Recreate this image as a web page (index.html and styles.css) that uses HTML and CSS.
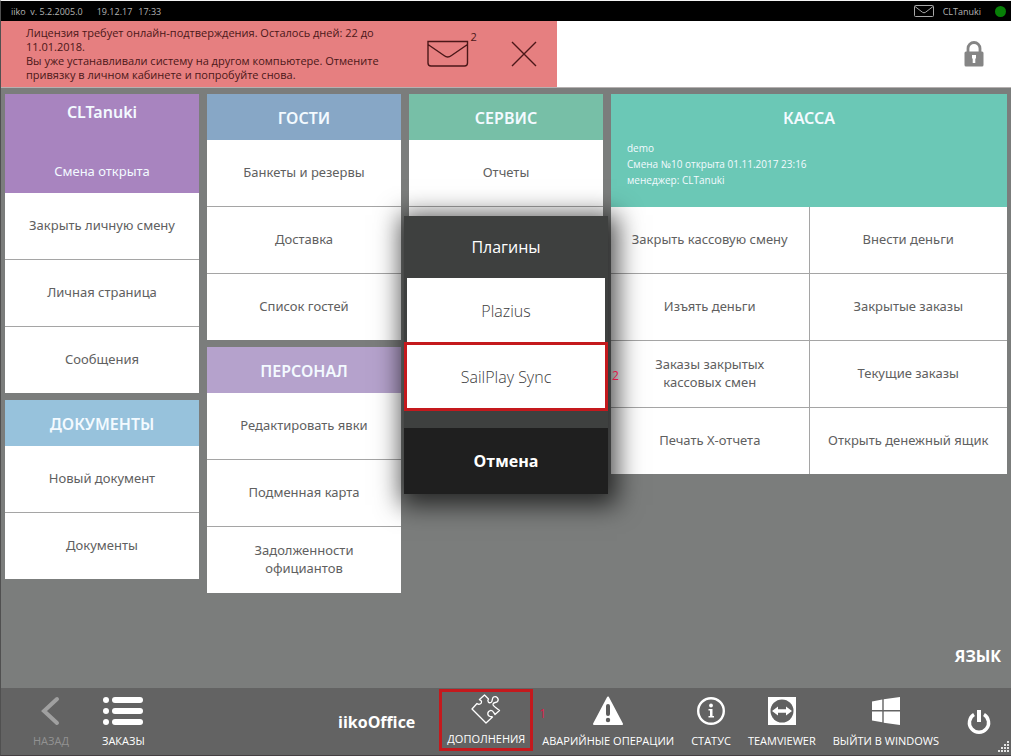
FILE: index.html
```html
<!DOCTYPE html>
<html lang="ru">
<head>
<meta charset="utf-8">
<title>iiko</title>
<link rel="stylesheet" href="styles.css">
</head>
<body>
<div class="app">
  <header class="status">
    <span>iiko&nbsp; v. 5.2.2005.0</span>
    <span class="status-date">19.12.17</span>
    <span class="status-time">17:33</span>
    <svg class="status-mail" width="20" height="12" viewBox="0 0 20 12" fill="none" stroke="#a8a8a8"><rect x=".5" y=".5" width="19" height="11" rx="1"/><path d="M1 1.5 8.500 7.300Q10 8.300 11.500 7.300L19 1.500"/></svg>
    <span class="status-user">CLTanuki</span>
    <span class="online"></span>
  </header>

  <section class="notice-row">
    <div class="notice">
      <p class="notice-text">Лицензия требует онлайн-подтверждения. Осталось дней: 22 до 11.01.2018.<br>Вы уже устанавливали систему на другом компьютере. Отмените привязку в личном кабинете и попробуйте снова.</p>
      <button class="icon-btn mail-btn" aria-label="Сообщения">
        <svg width="42" height="28" viewBox="0 0 42 28" fill="none" stroke="#4b1718" stroke-width="1.4"><path d="M1 1.5H40.5V23Q40.5 26 37.5 26H4Q1 26 1 23ZM1 4.500 17 15.500Q20.700 18.500 24.500 15.500L40.500 4.500"/></svg>
        <span class="mail-count">2</span>
      </button>
      <button class="icon-btn" aria-label="Закрыть">
        <svg width="26" height="26" viewBox="0 0 26 26" stroke="#4b1718" stroke-width="1.4"><path d="M1 1 25 25M25 1 1 25"/></svg>
      </button>
    </div>
    <button class="icon-btn lock" aria-label="Заблокировать">
      <svg width="20" height="26" viewBox="0 0 20 26"><path d="M4 11V7.500a6 6 0 0 1 12 0V11" fill="none" stroke="#858585" stroke-width="2.800"/><rect x=".5" y="10.500" width="19" height="15" rx="1.500" fill="#858585"/><path d="M8 14h4v3.500h-.7V22H8.700v-4.500H8z" fill="#fff"/></svg>
    </button>
  </section>

  <main class="board">
    <div class="column">
      <section class="card">
        <header class="card-head user-head"><h2>CLTanuki</h2><p>Смена открыта</p></header>
        <div class="cells">
          <button class="cell">Закрыть личную смену</button>
          <button class="cell">Личная страница</button>
          <button class="cell">Сообщения</button>
        </div>
      </section>
      <section class="card">
        <header class="card-head docs-head"><h2>ДОКУМЕНТЫ</h2></header>
        <div class="cells">
          <button class="cell">Новый документ</button>
          <button class="cell">Документы</button>
        </div>
      </section>
    </div>
    <div class="column">
      <section class="card">
        <header class="card-head guest-head"><h2>ГОСТИ</h2></header>
        <div class="cells">
          <button class="cell">Банкеты и резервы</button>
          <button class="cell">Доставка</button>
          <button class="cell">Список гостей</button>
        </div>
      </section>
      <section class="card">
        <header class="card-head staff-head"><h2>ПЕРСОНАЛ</h2></header>
        <div class="cells">
          <button class="cell">Редактировать явки</button>
          <button class="cell">Подменная карта</button>
          <button class="cell">Задолженности официантов</button>
        </div>
      </section>
    </div>
    <div class="column">
      <section class="card">
        <header class="card-head service-head"><h2>СЕРВИС</h2></header>
        <div class="cells">
          <button class="cell">Отчеты</button>
          <div class="cell"></div>
        </div>
      </section>
    </div>
    <div class="column wide">
      <section class="card">
        <header class="card-head cash-head">
          <h2>КАССА</h2>
          <p>demo<br>Смена №10 открыта 01.11.2017 23:16<br>менеджер: CLTanuki</p>
        </header>
        <div class="cells two">
          <button class="cell">Закрыть кассовую смену</button>
          <button class="cell">Внести деньги</button>
          <button class="cell">Изъять деньги</button>
          <button class="cell">Закрытые заказы</button>
          <button class="cell narrow">Заказы закрытых кассовых смен</button>
          <button class="cell">Текущие заказы</button>
          <button class="cell">Печать X-отчета</button>
          <button class="cell">Открыть денежный ящик</button>
        </div>
      </section>
    </div>
  </main>

  <button class="language">ЯЗЫК</button>

  <footer class="toolbar">
    <button class="tool back" disabled>
      <svg width="28" height="30" viewBox="0 0 28 30" fill="none" stroke="#a0a0a0" stroke-width="4" stroke-linecap="round"><path d="M20 3 7 15 20 27"/></svg>
      <span>НАЗАД</span>
    </button>
    <button class="tool orders">
      <svg width="42" height="30" viewBox="0 0 42 30" fill="#fff"><circle cx="4" cy="4" r="3"/><circle cx="4" cy="15" r="3"/><circle cx="4" cy="26" r="3"/><rect x="10" y="1" width="31" height="6" rx="3"/><rect x="10" y="12" width="31" height="6" rx="3"/><rect x="10" y="23" width="31" height="6" rx="3"/></svg>
      <span>ЗАКАЗЫ</span>
    </button>
    <button class="office">iikoOffice</button>
    <button class="tool addons">
      <svg width="30" height="30" viewBox="0 0 30 30" fill="none" stroke="#fff" stroke-width="1.300" stroke-linejoin="round"><path d="M1 15 6 9.500C8 11 11 10 10.500 7.500 10 5.500 8 6 8.500 5.500L13.500 1 17.500 5C16 7 17.500 9.500 20 8.500 22 7.500 20.500 4.500 22.500 3 25.500 1.500 28.500 5 26.500 7.500 25 9 22.500 8 22 10 21.500 11.500 23 12 24 13L28.500 16.500 24 20.500C22.500 18.500 22 16 19.500 16.500 16 17.500 16 21.500 19 22.500 20.500 23 21 22 21.500 23L15 29Z"/></svg>
      <span>ДОПОЛНЕНИЯ</span>
      <span class="mark mark-one">1</span>
    </button>
    <button class="tool">
      <svg width="32" height="30" viewBox="0 0 32 30"><path d="M16 1.500 30 28H2Z" fill="#fff" stroke="#fff" stroke-width="2" stroke-linejoin="round"/><path d="M16 10v8" stroke="#5c5c5c" stroke-width="4" stroke-linecap="round"/><circle cx="16" cy="24" r="2.200" fill="#5c5c5c"/></svg>
      <span>АВАРИЙНЫЕ ОПЕРАЦИИ</span>
    </button>
    <button class="tool">
      <svg width="30" height="30" viewBox="0 0 30 30"><circle cx="15" cy="15" r="12.800" fill="none" stroke="#fff" stroke-width="2.400"/><circle cx="15" cy="9.500" r="1.900" fill="#fff"/><path d="M12.500 13h4v7h1.500v1.600h-5.500V20H14v-5.500h-1.500z" fill="#fff"/></svg>
      <span>СТАТУС</span>
    </button>
    <button class="tool">
      <svg width="30" height="30" viewBox="0 0 30 30"><path d="M1 1h28v28H1z" fill="#fff"/><circle cx="15" cy="15" r="11.500" fill="#616161"/><path d="m5 15 6-4.500v2.800h8v-2.800l6 4.500-6 4.500v-2.800h-8v2.800z" fill="#fff"/></svg>
      <span>TEAMVIEWER</span>
    </button>
    <button class="tool">
      <svg width="30" height="30" viewBox="0 0 30 30" fill="#fff"><path d="M1 5.500 11.300 3.500V14H1zM12.700 3.200 29 1v13H12.700zM1 15.500h10.300v10.800L1 24.500zM12.700 15.500H29V29l-16.300-2.300z"/></svg>
      <span>ВЫЙТИ В WINDOWS</span>
    </button>
    <button class="icon-btn power" aria-label="Выключить">
      <svg width="24" height="26" viewBox="0 0 24 26" fill="none" stroke="#fff" stroke-width="3.400"><path d="M7 5.500a9.600 9.600 0 1 0 10 0"/><path d="M12 1v12" stroke-width="4"/></svg>
    </button>
    <svg class="grip" width="12" height="12" viewBox="0 0 12 12" fill="#e4e4e4"><path d="M9 0h2v2H9zM6 3h2v2H6zM9 3h2v2H9zM3 6h2v2H3zM6 6h2v2H6zM9 6h2v2H9zM0 9h2v2H0zM3 9h2v2H3zM6 9h2v2H6zM9 9h2v2H9z"/></svg>
  </footer>

  <div class="overlay">
    <div class="dialog" role="dialog" aria-labelledby="dialog-title">
      <h2 id="dialog-title">Плагины</h2>
      <div class="plugins">
        <button>Plazius</button>
        <button class="chosen">SailPlay Sync<span class="mark mark-two">2</span></button>
      </div>
      <button class="cancel">Отмена</button>
    </div>
  </div>
</div>
</body>
</html>
```
FILE: styles.css
```css
* { box-sizing: border-box; }
body {
  margin: 0;
  font-family: "Open Sans", "Noto Sans", sans-serif;
  font-size: 13px;
}
h2, p { margin: 0; }
button {
  margin: 0;
  padding: 0;
  border: 0;
  background: none;
  color: inherit;
  font: inherit;
}
svg { display: block; flex: none; }

.app {
  position: relative;
  display: flex;
  flex-direction: column;
  min-height: 100vh;
  background: #7b7d7c;
  border-top: 1px solid #f4f4f4;
  border-left: 1px solid #505050;
  border-bottom: 1px solid #453f42;
}

.status {
  display: flex;
  align-items: center;
  height: 20px;
  padding: 0 5px 0 10px;
  background: #000;
  color: #b4b4b4;
  font-size: 9px;
}
.status-date { margin-left: 14px; }
.status-time { margin-left: 6px; }
.status-mail { margin-left: auto; }
.status-user { margin: 0 14px 0 9px; }
.online {
  width: 11px;
  height: 11px;
  border-radius: 50%;
  background: #078007;
}

.notice-row {
  display: flex;
  justify-content: space-between;
  min-height: 67px;
  background: #fff;
  border-bottom: 1px solid #b5b0b0;
}
.notice {
  display: flex;
  align-items: center;
  width: 55%;
  padding: 0 20px 0 25px;
  background: #e67f80;
  color: #4b1718;
}
.notice-text {
  width: 360px;
  margin-right: auto;
  font-size: 11px;
  line-height: 14px;
}
.icon-btn { display: flex; align-items: center; justify-content: center; }
.mail-btn { position: relative; margin-right: 42px; }
.mail-count {
  position: absolute;
  left: 44px;
  top: -11px;
  font-size: 11px;
}
.lock { width: 74px; }

.board {
  display: grid;
  grid-template-columns: repeat(5, minmax(0, 1fr));
  gap: 8px;
  padding: 6px 4px 0 4px;
  font-family: "Noto Sans", "Open Sans", sans-serif;
}
.column { display: flex; flex-direction: column; gap: 7px; }
.wide { grid-column: span 2; }
.card-head { min-height: 46px; color: #f3faff; text-align: center; }
.card-head h2 {
  padding-top: 3px;
  font-size: 16px;
  font-weight: 600;
  line-height: 43px;
}
.user-head { min-height: 99px; background: #a884bf; }
.user-head h2 { padding-top: 0; line-height: 36px; }
.user-head p { padding-top: 32px; line-height: 18px; }
.docs-head { background: #97c2dc; }
.guest-head { background: #87a7c6; }
.staff-head { background: #b5a2cc; }
.service-head { background: #77bfa7; }
.cash-head { min-height: 113px; background: #6bc8b6; }
.cash-head p {
  padding-left: 16px;
  text-align: left;
  font-family: "Open Sans", "Noto Sans", sans-serif;
  font-size: 10px;
  line-height: 16px;
}
.cells { display: grid; gap: 1px; background: #a5a5a5; }
.two { grid-template-columns: 1fr 1fr; }
.cell {
  min-height: 66px;
  padding: 0 12px 2px;
  background: #fff;
  color: #606060;
  line-height: 18px;
}
.narrow { padding: 0 36px 2px; }

.language {
  align-self: flex-end;
  margin: auto 10px 20px 0;
  color: #fff;
  font-size: 16px;
  font-weight: 700;
  line-height: 24px;
}

.toolbar {
  position: relative;
  display: flex;
  align-items: center;
  height: 67px;
  padding: 0 20px 0 32px;
  background: #636363;
  color: #fff;
  font-size: 11px;
}
.tool {
  position: relative;
  display: flex;
  flex-direction: column;
  align-items: center;
  gap: 5px;
  margin-right: 17px;
  padding-top: 3px;
  line-height: 19px;
  white-space: nowrap;
}
.back { color: #929292; margin-right: 33px; }
.orders { margin-right: auto; }
.office { margin-right: 24px; font-size: 16px; font-weight: 700; }
.addons {
  width: 94px;
  height: 62px;
  margin: 0 9px 3px 0;
  padding-top: 2px;
  border: 3px solid #c4191d;
}
.power { margin-left: 11px; }
.grip { position: absolute; right: 1px; bottom: 2px; }
.mark { position: absolute; color: #df1747; font-size: 12px; }
.mark-one { left: 97px; top: 12px; }
.mark-two { left: 205px; top: 22px; font-weight: 400; }

.overlay {
  position: absolute;
  inset: 0 0 46px 0;
  display: flex;
  align-items: center;
  justify-content: center;
}
.dialog {
  width: 204px;
  background: #3e403f;
  color: #fff;
  font-size: 16px;
  text-align: center;
  box-shadow: 3px 5px 24px 6px rgba(0, 0, 0, .7);
}
.dialog h2 { font-size: 16px; font-weight: 400; line-height: 62px; }
.plugins { display: grid; }
.plugins button {
  height: 66px;
  margin: 0 3px;
  background: #fff;
  color: #3c3c3c;
  font-weight: 300;
}
.plugins .chosen {
  position: relative;
  height: 69px;
  margin: -2px 0 0;
  border: 3px solid #c4191d;
}
.cancel {
  width: 100%;
  height: 66px;
  margin-top: 17px;
  background: #1f1f1f;
  font-weight: 700;
}
```
